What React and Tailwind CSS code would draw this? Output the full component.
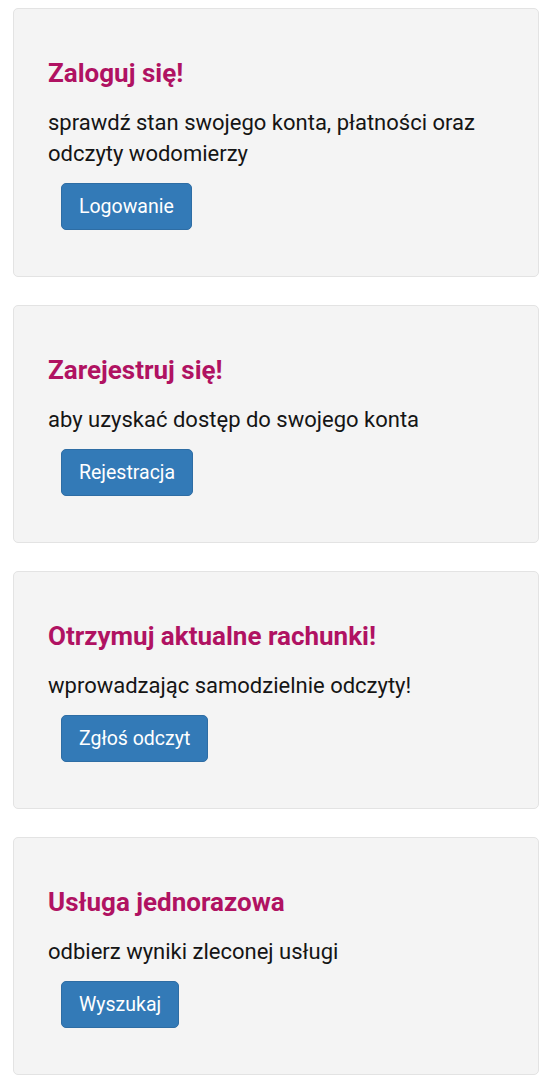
const CARDS = [
  {
    title: 'Zaloguj się!',
    text: 'sprawdź stan swojego konta, płatności oraz odczyty wodomierzy',
    button: 'Logowanie',
  },
  {
    title: 'Zarejestruj się!',
    text: 'aby uzyskać dostęp do swojego konta',
    button: 'Rejestracja',
  },
  {
    title: 'Otrzymuj aktualne rachunki!',
    text: 'wprowadzając samodzielnie odczyty!',
    button: 'Zgłoś odczyt',
  },
  {
    title: 'Usługa jednorazowa',
    text: 'odbierz wyniki zleconej usługi',
    button: 'Wyszukaj',
  },
]

function InfoCard({ title, text, button }) {
  return (
    <div className="rounded-[5px] border border-[#e3e3e3] bg-[#f4f4f4] pl-[34px] pr-[40px] pt-[50px] pb-[46px]">
      <h4 className="text-[26px] font-bold leading-[29px] text-[#b01262]">{title}</h4>
      <p className="mt-[19px] text-[22px] leading-[31px] text-[#151515]">{text}</p>
      <button
        type="button"
        className="mt-[14px] ml-[13px] h-[47px] rounded-[5px] border border-[#2e6da4] bg-[#337ab7] px-[17px] text-[19.5px] leading-none text-white"
      >
        {button}
      </button>
    </div>
  )
}

export default function App() {
  return (
    <div
      className="min-h-[1080px] bg-white pt-[8px] pl-[13px] pr-[19px] pb-[7px] flex flex-col gap-[28px]"
      style={{ fontFamily: 'Roboto, "Noto Sans", sans-serif' }}
    >
      {CARDS.map((card) => (
        <InfoCard key={card.button} {...card} />
      ))}
    </div>
  )
}
